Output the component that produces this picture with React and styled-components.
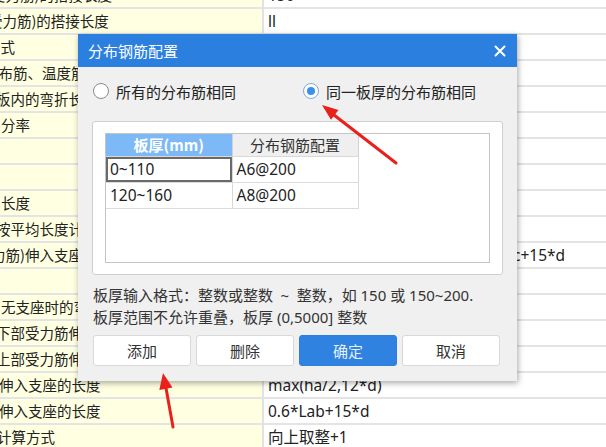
import React from "react";
import styled, { createGlobalStyle } from "styled-components";

const GlobalStyle = createGlobalStyle`
  html, body {
    margin: 0;
    padding: 0;
    overflow: hidden;
    background: #ffffff;
  }
  body {
    font-family: "Noto Sans", "Noto Sans CJK SC", sans-serif;
    color: #222;
  }
`;

const Screen = styled.div`
  position: relative;
  width: 606px;
  height: 447px;
  overflow: hidden;
  background: #ffffff;
`;

const Sheet = styled.div`
  margin-top: -17px;
`;

const SheetRow = styled.div`
  display: grid;
  grid-template-columns: 264px 1fr;
  height: 26px;
  box-sizing: border-box;
  border-bottom: 2px solid #e4e4e4;
  line-height: 24px;
`;

const LabelCell = styled.div`
  background: #ffffe1;
  border-right: 2px solid #e2e2e2;
  overflow: hidden;
  white-space: nowrap;
  font-family: "Noto Sans CJK SC", sans-serif;
  font-size: 14.5px;
`;

const LabelText = styled.span`
  display: block;
  margin-left: ${(p) => p.$shift}px;
`;

const ValueCell = styled.div`
  padding-left: 4px;
  white-space: nowrap;
  overflow: hidden;
  font-size: 15.5px;
`;

const Dialog = styled.div`
  position: absolute;
  left: 78px;
  top: 34px;
  width: 439px;
  height: 347px;
  background: #f0f0f0;
  box-shadow: 1px 2px 6px rgba(0, 0, 0, 0.35);
  display: flex;
  flex-direction: column;
`;

const TitleBar = styled.div`
  height: 33px;
  background: #2b80df;
  color: #ffffff;
  display: flex;
  align-items: center;
  justify-content: space-between;
  padding: 0 10px 0 10px;
  font-family: "Noto Sans CJK SC", sans-serif;
  font-size: 15px;
`;

const CloseButton = styled.span`
  display: flex;
  width: 14px;
  height: 14px;
  align-items: center;
  justify-content: center;
`;

const Body = styled.div`
  flex: 1;
  display: flex;
  flex-direction: column;
  padding: 0 14px 15px 14px;
`;

const RadioRow = styled.div`
  display: flex;
  align-items: center;
  height: 48px;
  padding-left: 1px;
  font-family: "Noto Sans CJK SC", sans-serif;
  font-size: 15px;
`;

const RadioOption = styled.label`
  display: flex;
  align-items: center;
  gap: 7px;
  width: ${(p) => p.$width}px;
  color: #222;
`;

const RadioCircle = styled.span`
  width: 16px;
  height: 16px;
  box-sizing: border-box;
  border-radius: 50%;
  border: 1px solid ${(p) => (p.$checked ? "#7ea9d8" : "#8a8a8a")};
  background: #ffffff;
  display: flex;
  align-items: center;
  justify-content: center;
  &::after {
    content: "";
    width: 8px;
    height: 8px;
    border-radius: 50%;
    background: ${(p) => (p.$checked ? "#3b8ff0" : "transparent")};
  }
`;

const GroupBox = styled.div`
  margin-top: 6px;
  height: 154px;
  box-sizing: border-box;
  border: 1px solid #cfcfcf;
  border-radius: 3px;
  background: #ffffff;
  padding: 11px 12px;
`;

const GridBox = styled.div`
  height: 130px;
  box-sizing: border-box;
  border: 1px solid #c4c4c4;
  background: #ffffff;
`;

const Table = styled.table`
  border-collapse: collapse;
  font-size: 15.5px;
  table-layout: fixed;
`;

const HeadCell = styled.th`
  width: 126px;
  height: 22px;
  padding: 0;
  box-sizing: border-box;
  font-size: 15px;
  font-weight: ${(p) => (p.$active ? 600 : 400)};
  font-family: "Noto Sans CJK SC", sans-serif;
  background: ${(p) => (p.$active ? "#7db9f6" : "#efefef")};
  color: ${(p) => (p.$active ? "#ffffff" : "#333333")};
  border-right: 1px solid #d2d2d2;
  border-bottom: 1px solid #d8d8d8;
  line-height: 20px;
`;

const DataCell = styled.td`
  height: 26px;
  padding: 0 0 0 4px;
  box-sizing: border-box;
  border-right: 1px solid #d8d8d8;
  border-bottom: 1px solid #dcdcdc;
  color: #222;
  white-space: nowrap;
  box-shadow: ${(p) => (p.$selected ? "inset 0 0 0 2px #6a6a6a" : "none")};
`;

const HelpText = styled.div`
  margin-top: 9px;
  padding-left: 1px;
  font-size: 15px;
  line-height: 22px;
  color: #333;
  white-space: nowrap;
`;

const ButtonRow = styled.div`
  margin-top: auto;
  display: flex;
  gap: 5px;
  padding-left: 1px;
`;

const Button = styled.button`
  width: 98px;
  height: 31px;
  border-radius: 3px;
  font-family: "Noto Sans CJK SC", sans-serif;
  font-size: 15px;
  border: 1px solid ${(p) => (p.$primary ? "#2b80df" : "#d9d9d9")};
  background: ${(p) => (p.$primary ? "#2f82e0" : "#ffffff")};
  color: ${(p) => (p.$primary ? "#e6f0fc" : "#333333")};
  padding: 0;
`;

const Overlay = styled.svg`
  position: absolute;
  left: 0;
  top: 0;
  pointer-events: none;
`;

const rows = [
  { label: "受力筋)的搭接长度", shift: -9, value: "150" },
  { label: "(受力筋)的搭接长度", shift: -17, value: "ll" },
  { label: "方式", shift: -14, value: "" },
  { label: "分布筋、温度筋", shift: -16, value: "" },
  { label: "板内的弯折长度", shift: -4, value: "" },
  { label: "分率", shift: 1, value: "" },
  { label: "", shift: 0, value: "" },
  { label: "", shift: 0, value: "" },
  { label: "长度", shift: 1, value: "" },
  { label: "按平均长度计算", shift: -4, value: "" },
  { label: "力筋)伸入支座的长度", shift: -9, value: "max(0.35*Lab,0.5*hc+5*d)+ha-bhc+15*d" },
  { label: "", shift: 0, value: "" },
  { label: "无支座时的弯折长度", shift: 1, value: "" },
  { label: "下部受力筋伸入支座的长度", shift: -4, value: "" },
  { label: "上部受力筋伸入支座的长度", shift: -4, value: "" },
  { label: "伸入支座的长度", shift: -1, value: "max(ha/2,12*d)" },
  { label: "伸入支座的长度", shift: -1, value: "0.6*Lab+15*d" },
  { label: "计算方式", shift: -3, value: "向上取整+1" },
];

export default function App() {
  return (
    <Screen>
      <GlobalStyle />
      <Sheet>
        {rows.map((r, i) => (
          <SheetRow key={i}>
            <LabelCell>
              <LabelText $shift={r.shift}>{r.label}</LabelText>
            </LabelCell>
            <ValueCell>{r.value}</ValueCell>
          </SheetRow>
        ))}
      </Sheet>

      <Dialog>
        <TitleBar>
          <span>分布钢筋配置</span>
          <CloseButton>
            <svg width="12" height="12" viewBox="0 0 12 12">
              <path d="M1.5 1.5 L10.5 10.5 M10.5 1.5 L1.5 10.5" stroke="#fff" strokeWidth="2" strokeLinecap="round" />
            </svg>
          </CloseButton>
        </TitleBar>
        <Body>
          <RadioRow>
            <RadioOption $width={210}>
              <RadioCircle />
              所有的分布筋相同
            </RadioOption>
            <RadioOption $width={200}>
              <RadioCircle $checked />
              同一板厚的分布筋相同
            </RadioOption>
          </RadioRow>
          <GroupBox>
            <GridBox>
              <Table>
                <thead>
                  <tr>
                    <HeadCell $active>板厚(mm)</HeadCell>
                    <HeadCell>分布钢筋配置</HeadCell>
                  </tr>
                </thead>
                <tbody>
                  <tr>
                    <DataCell $selected>0~110</DataCell>
                    <DataCell>A6@200</DataCell>
                  </tr>
                  <tr>
                    <DataCell>120~160</DataCell>
                    <DataCell>A8@200</DataCell>
                  </tr>
                </tbody>
              </Table>
            </GridBox>
          </GroupBox>
          <HelpText>
            板厚输入格式：整数或整数{"\u2002"}~{"\u2002"}整数，如 150 或 150~200.
            <br />
            板厚范围不允许重叠，板厚 (0,5000] 整数
          </HelpText>
          <ButtonRow>
            <Button>添加</Button>
            <Button>删除</Button>
            <Button $primary>确定</Button>
            <Button>取消</Button>
          </ButtonRow>
        </Body>
      </Dialog>

      <Overlay width="606" height="447" viewBox="0 0 606 447">
        <line x1="396" y1="163" x2="334" y2="115" stroke="#e8211d" strokeWidth="3" strokeLinecap="round" />
        <polygon points="322,105 338.5,110 331,119.8" fill="#e8211d" />
        <line x1="173" y1="427" x2="166" y2="388" stroke="#e8211d" strokeWidth="3" strokeLinecap="round" />
        <polygon points="163,373 172.5,387.5 159.3,390" fill="#e8211d" />
      </Overlay>
    </Screen>
  );
}
